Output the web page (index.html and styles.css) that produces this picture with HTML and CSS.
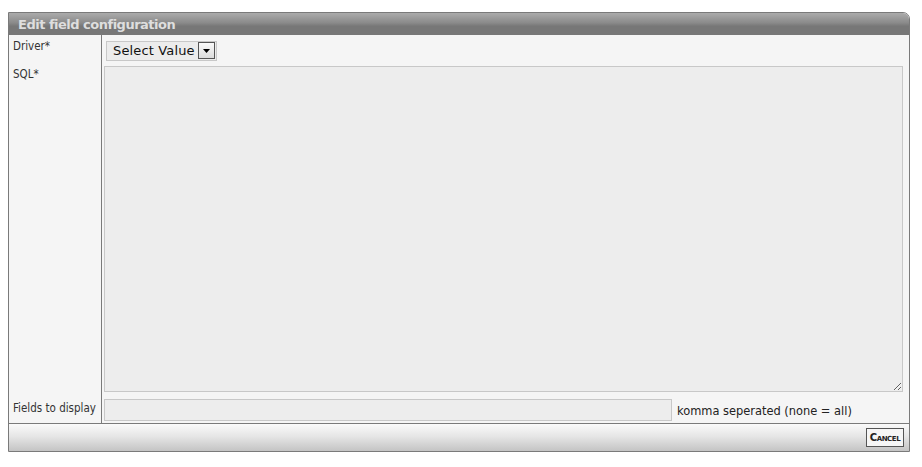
FILE: index.html
```html
<!DOCTYPE html>
<html lang="en">
<head>
  <meta charset="UTF-8" />
  <title>Edit field configuration</title>
  <link rel="stylesheet" href="styles.css">
</head>
<body>

  <div class="panel">
    <div class="panel-head">Edit field configuration</div>

    <div class="form">
      <div class="label">Driver*</div>
      <div class="value row-driver">
        <div class="select">
          <span>Select Value</span>
          <span class="select-btn">
            <svg width="7" height="4" viewBox="0 0 7 4"><path d="M0 0h7L3.5 4z" fill="#000"/></svg>
          </span>
        </div>
      </div>

      <div class="label">SQL*</div>
      <div class="value row-sql">
        <textarea class="sql"></textarea>
      </div>

      <div class="label label-fields">Fields to display</div>
      <div class="value row-fields">
        <input type="text" class="fields">
        <span class="hint">komma seperated (none = all)</span>
      </div>
    </div>

    <div class="panel-foot">
      <button class="cancel">Cancel</button>
    </div>
  </div>

</body>
</html>
```

FILE: styles.css
```css
body {
  margin: 0;
  padding: 12px 0 0 8px;
  background: #fff;
  font-family: Tahoma, "DejaVu Sans", sans-serif;
}
.panel {
  width: 900px;
  border: 1px solid #7a7a7a;
  border-top-right-radius: 7px;
  background: #f5f5f5;
}
.panel-head {
  height: 22px;
  line-height: 23px;
  padding-left: 9px;
  border-top-right-radius: 6px;
  background: linear-gradient(#ababab, #8a8a8a 45%, #777 60%, #777);
  color: #dedede;
  font-family: Verdana, "DejaVu Sans", sans-serif;
  font-weight: bold;
  font-size: 13px;
  letter-spacing: -0.5px;
}
.form {
  display: grid;
  grid-template-columns: 93px 1fr;
}
.label {
  border-right: 1px solid #7a7a7a;
  padding: 4px 0 0 4px;
  font-size: 11.5px;
  color: #333;
  font-family: "DejaVu Sans Condensed", "DejaVu Sans", sans-serif;
}
.label-fields {
  padding-top: 6px;
}
.value {
  padding-left: 2px;
}
.row-driver {
  height: 28px;
  padding-top: 5px;
  box-sizing: border-box;
}
.select {
  display: inline-flex;
  align-items: center;
  justify-content: space-between;
  margin-left: 2px;
  width: 111px;
  height: 20px;
  box-sizing: border-box;
  border: 1px solid #c8c8c8;
  background: #ececec;
  padding: 0 1px 0 6px;
  font-family: "DejaVu Sans", sans-serif;
  font-size: 13px;
  letter-spacing: 0.15px;
  color: #111;
}
.select-btn {
  display: flex;
  align-items: center;
  justify-content: center;
  width: 15px;
  height: 15px;
  border: 1px solid #555;
  background: linear-gradient(#fafafa, #dcdcdc);
}
.row-sql {
  padding-top: 3px;
  height: 332px;
  box-sizing: border-box;
}
.sql {
  display: block;
  width: 799px;
  height: 326px;
  box-sizing: border-box;
  margin: 0;
  border: 1px solid #c8c8c8;
  background: #ededed;
  resize: both;
}
.row-fields {
  display: flex;
  align-items: center;
  height: 28px;
  padding-top: 2px;
  box-sizing: border-box;
}
.fields {
  width: 568px;
  height: 22px;
  box-sizing: border-box;
  margin: 0;
  border: 1px solid #c8c8c8;
  background: #ededed;
}
.hint {
  margin-left: 5px;
  font-family: "DejaVu Sans Condensed", "DejaVu Sans", sans-serif;
  font-size: 12.7px;
  color: #222;
}
.panel-foot {
  display: flex;
  justify-content: flex-end;
  align-items: center;
  height: 27px;
  border-top: 1px solid #7a7a7a;
  padding-right: 5px;
  background: linear-gradient(#fafafa, #e6e6e6 45%, #c4c4c4);
}
.cancel {
  width: 38px;
  height: 19px;
  padding: 0;
  border: 1px solid #555;
  background: #f6f6f6;
  font-family: Verdana, "DejaVu Sans", sans-serif;
  font-variant: small-caps;
  font-weight: bold;
  font-size: 10px;
  color: #222;
  letter-spacing: -0.4px;
  cursor: pointer;
}
```
